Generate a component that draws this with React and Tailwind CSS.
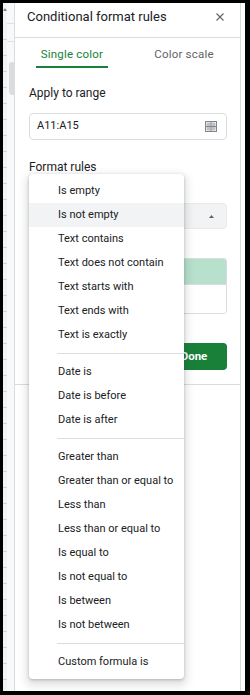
export default function App() {
  const groups = [
    ["Is empty", "Is not empty", "Text contains", "Text does not contain", "Text starts with", "Text ends with", "Text is exactly"],
    ["Date is", "Date is before", "Date is after"],
    ["Greater than", "Greater than or equal to", "Less than", "Less than or equal to", "Is equal to", "Is not equal to", "Is between", "Is not between"],
    ["Custom formula is"],
  ];
  return (
    <div
      className="w-[250px] h-[695px] bg-black pt-[3px] pl-[3px] pr-[5px] pb-[4px] flex text-[#202124]"
      style={{ fontFamily: "Roboto, 'Noto Sans', Arial, sans-serif" }}
    >
      {/* left sheet strip */}
      <div className="w-[12px] flex flex-row border-r border-[#dadce0] bg-[#f8f9fa]">
        <div className="w-[4px] flex flex-col bg-[#f1f3f4]">
          <div className="h-[21px] flex items-start justify-center pt-[5px]">
            <svg width="4" height="3" viewBox="0 0 4 3"><path d="M0 3 L2 0 L4 3 Z" fill="#80868b" /></svg>
          </div>
          <div className="flex-1 bg-[repeating-linear-gradient(to_bottom,transparent_0,transparent_15px,#d0d2d6_15px,#d0d2d6_16px)]" />
        </div>
        <div className="flex-1 flex flex-col">
          <div className="h-[21px] border-b border-[#e0e0e0]" />
          <div className="h-[18px] border-b border-[#e0e0e0]" />
          <div className="mt-[20px] ml-[2px] w-[7px] h-[33px] rounded-[3px] bg-[#dadce0]" />
        </div>
      </div>

      {/* panel */}
      <div className="flex-1 relative flex flex-col bg-white border-r border-[#dadce0]">
        <div className="h-[35px] border-b border-[#dadce0] flex items-start justify-between pl-[12px] pr-[16px] pt-[5px]">
          <span className="text-[13px] leading-[18px] text-[#202124]">Conditional format rules</span>
          <svg className="mt-[5px]" width="8" height="8" viewBox="0 0 8 8">
            <path d="M0.5 0.5 L7.5 7.5 M7.5 0.5 L0.5 7.5" stroke="#5f6368" strokeWidth="1.1" />
          </svg>
        </div>

        <div className="h-[30px] flex flex-row ml-[21px]">
          <div className="w-[72px] flex flex-col items-center">
            <span className="mt-[9px] h-[14px] leading-[14px] text-[11.5px] tracking-[0.2px] text-[#188038]">Single color</span>
            <div className="mt-[5px] w-full h-[2px] bg-[#188038]" />
          </div>
          <div className="w-[72px] ml-[40px] flex flex-col items-center">
            <span className="mt-[9px] h-[14px] leading-[14px] text-[11.5px] tracking-[0.2px] text-[#5f6368]">Color scale</span>
          </div>
        </div>

        <div className="pl-[14px] pr-[13px] flex flex-col">
          <div className="mt-[17px] h-[16px] leading-[16px] text-[12px]">Apply to range</div>
          <div className="mt-[12px] h-[27px] border border-[#dadce0] rounded-[4px] flex items-center justify-between pl-[7px] pr-[9px]">
            <span className="text-[11px] text-[#202124]">A11:A15</span>
            <svg width="12" height="11" viewBox="0 0 12 11">
              <rect x="0.5" y="0.5" width="11" height="10" fill="none" stroke="#80868b" strokeWidth="1" />
              <rect x="1.5" y="1.5" width="4" height="3.5" fill="#bdc1c6" />
              <rect x="6.5" y="1.5" width="4" height="3.5" fill="#bdc1c6" />
              <rect x="1.5" y="6" width="4" height="3.5" fill="#bdc1c6" />
              <rect x="6.5" y="6" width="4" height="3.5" fill="#bdc1c6" />
              <path d="M6 0.5 V10.5 M0.5 5.5 H11.5" stroke="#80868b" strokeWidth="1" />
            </svg>
          </div>
          <div className="mt-[19px] h-[16px] leading-[16px] text-[12px]">Format rules</div>
          <div className="mt-[28px] h-[26px] bg-[#f1f3f4] border border-[#e8eaed] rounded-[4px] flex items-center justify-end pr-[12px]">
            <svg width="5" height="3" viewBox="0 0 5 3"><path d="M0 3 L2.5 0 L5 3 Z" fill="#5f6368" /></svg>
          </div>
          <div className="mt-[29px] h-[56px] border border-[#dadce0] rounded-[3px] flex flex-col overflow-hidden">
            <div className="h-[25px] bg-[#b7e1cd]" />
            <div className="flex-1 bg-white border-t border-[#dadce0]" />
          </div>
          <div className="mt-[29px] flex justify-end">
            <div className="w-[66px] h-[27px] rounded-[4px] bg-[#188038] text-white text-[11.5px] font-bold flex items-center justify-center">Done</div>
          </div>
        </div>
        <div className="mt-[14px] border-t border-[#dadce0]" />

        {/* dropdown menu */}
        <div className="absolute left-[14px] top-[171px] w-[155px] bg-white rounded-[4px] shadow-[0_1px_3px_rgba(60,64,67,0.3),0_4px_8px_3px_rgba(60,64,67,0.15)] py-[5px] flex flex-col">
          {groups.map((g, gi) => (
            <div key={gi} className="flex flex-col">
              {gi > 0 && <div className="my-[6px] ml-[28px] h-px bg-[#dadce0]" />}
              {g.map((t) => (
                <div
                  key={t}
                  className={
                    "h-[24px] pl-[29px] flex items-center text-[11px] text-[#202124] " +
                    (t === "Is not empty" ? "bg-[#f1f3f4]" : "")
                  }
                >
                  {t}
                </div>
              ))}
            </div>
          ))}
        </div>
      </div>

      <div className="w-[4px] bg-white" />
    </div>
  );
}
